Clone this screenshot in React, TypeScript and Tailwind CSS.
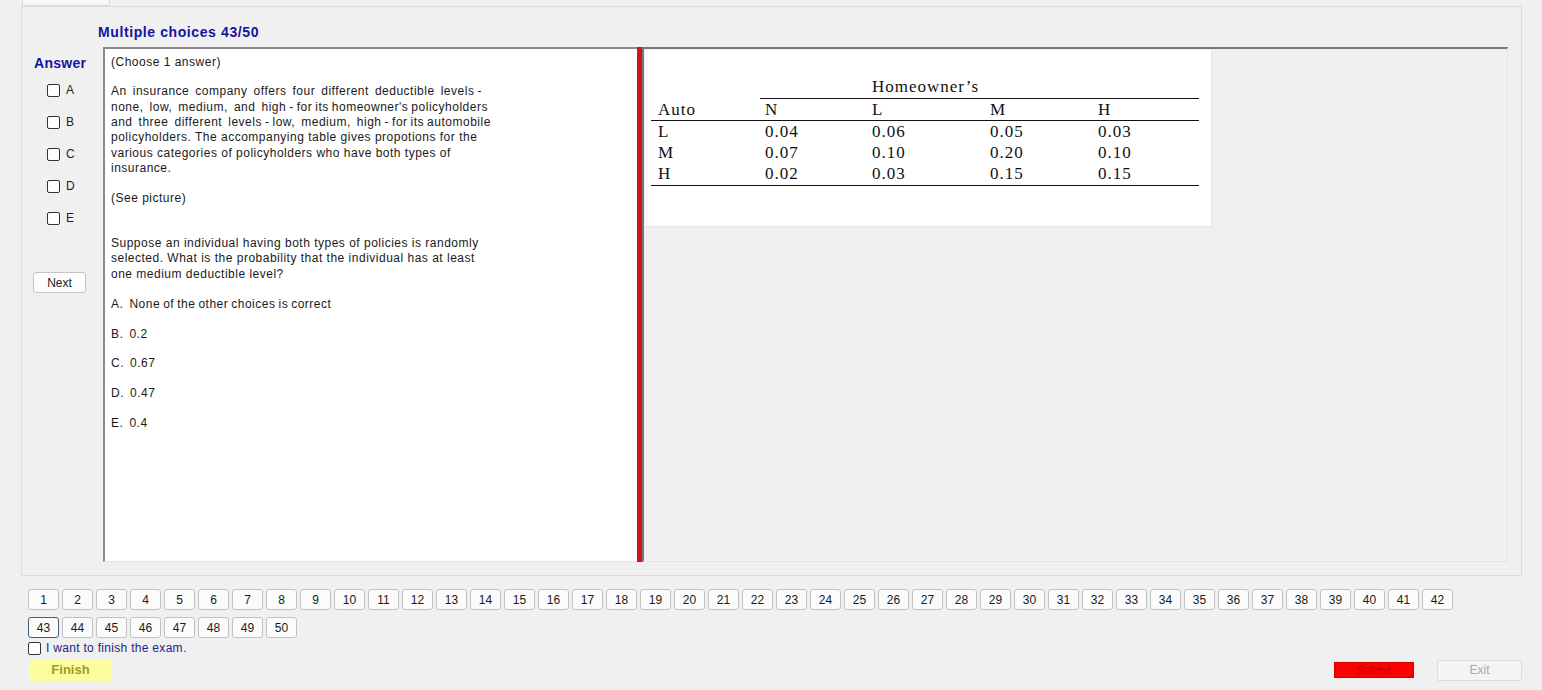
import React from "react";

const para1a = [
  "An  insurance  company  offers  four  different  deductible  levels -",
  "none,  low,  medium,  and  high - for its homeowner's policyholders",
  "and  three  different  levels - low,  medium,  high - for its automobile",
];
const para1b = [
  "policyholders. The accompanying table gives propotions for the",
  "various categories of policyholders who have both types of",
  "insurance.",
];

const para2 = [
  "Suppose an individual having both types of policies is randomly",
  "selected. What is the probability that the individual has at least",
  "one medium deductible level?",
];

const choices = [
  "A.  None of the other choices is correct",
  "B.  0.2",
  "C.  0.67",
  "D.  0.47",
  "E.  0.4",
];

const rows = [
  ["L", "0.04", "0.06", "0.05", "0.03"],
  ["M", "0.07", "0.10", "0.20", "0.10"],
  ["H", "0.02", "0.03", "0.15", "0.15"],
];

function Cols({ cells }: { cells: string[] }) {
  return (
    <div className="flex h-[21px] items-center pl-[13px]">
      <div className="w-[107px]">{cells[0]}</div>
      <div className="w-[107px]">{cells[1]}</div>
      <div className="w-[118px]">{cells[2]}</div>
      <div className="w-[108px]">{cells[3]}</div>
      <div>{cells[4]}</div>
    </div>
  );
}

const btn =
  "w-[31px] h-[21px] border border-[#c2c2c2] rounded-[3px] bg-[#fbfbfb] flex items-center justify-center text-[12px] text-[#1a1a1a]";
const btnActive =
  "w-[31px] h-[21px] border border-[#3d5f80] rounded-[3px] bg-[#fbfbfb] flex items-center justify-center text-[12px] text-[#1a1a1a]";

export default function App() {
  const row1 = Array.from({ length: 42 }, (_, i) => i + 1);
  const row2 = Array.from({ length: 8 }, (_, i) => i + 43);
  return (
    <div
      className="w-[1542px] h-[690px] bg-[#f0f0f0] overflow-hidden text-[12px] text-[#1a1a1a]"
      style={{ fontFamily: '"Liberation Sans", Arial, sans-serif' }}
    >
      {/* tab strip */}
      <div className="h-[6px] flex">
        <div className="ml-[22px] w-[88px] h-[6px] bg-[#f7f7f7] border-x border-b border-[#d9d9d9]" />
      </div>
      {/* tab panel */}
      <div className="ml-[21px] w-[1501px] h-[570px] border border-[#dcdcdc] bg-[#f0f0f0]">
        <div className="h-[40px] pl-[76px] pt-[17px]">
          <div className="text-[14px] leading-[16px] font-bold tracking-[0.6px] text-[#1414a0]">Multiple choices 43/50</div>
        </div>
        <div className="flex h-[515px]">
          {/* left column */}
          <div className="w-[81px] flex flex-col">
            <div className="pl-[12px] pt-[8px] text-[14px] leading-[16px] font-bold tracking-[0.3px] text-[#1414a0]">Answer</div>
            <div className="mt-[3px] flex flex-col">
              {["A", "B", "C", "D", "E"].map((l) => (
                <div key={l} className="h-[32px] flex items-center pl-[25px]">
                  <div className="w-[13px] h-[13px] border border-[#333333] rounded-[2px] bg-white" />
                  <span className="ml-[6px] leading-[14px] text-[#222]">{l}</span>
                </div>
              ))}
            </div>
            <div className="mt-[38px] ml-[11px] w-[53px] h-[21px] border border-[#c4c4c4] rounded-[3px] bg-[#fdfdfd] flex items-center justify-center text-[12px] text-[#222]">
              Next
            </div>
          </div>
          {/* text box */}
          <div className="w-[534px] h-full bg-white border-t-2 border-l-2 border-[#8a8a8a] border-b border-b-[#e3e3e3] pl-[6px] pt-[5.5px] leading-[15.3px] text-[12px] tracking-[0.5px] text-[#1a1a1a]">
            <div>(Choose 1 answer)</div>
            <div className="mt-[14.7px]">
              {para1a.map((l, i) => (
                <div key={i} className="whitespace-pre [word-spacing:-0.8px]">{l}</div>
              ))}
              {para1b.map((l, i) => (
                <div key={i} className="whitespace-pre">{l}</div>
              ))}
            </div>
            <div className="mt-[14.7px]">(See picture)</div>
            <div className="mt-[29.7px]">
              {para2.map((l, i) => (
                <div key={i} className="whitespace-pre">{l}</div>
              ))}
            </div>
            {choices.map((c, i) => (
              <div key={i} className="mt-[14.7px] whitespace-pre [word-spacing:-0.8px]">{c}</div>
            ))}
          </div>
          {/* red splitter */}
          <div className="w-[5px] h-full bg-[#d0141a]" />
          {/* right panel */}
          <div className="w-[866px] h-full border-t-2 border-l-2 border-[#777777] border-b border-b-[#e3e3e3] border-r border-r-[#e3e3e3] bg-[#f0f0f0]">
            <div
              className="ml-[1px] mt-[1px] w-[567px] h-[177px] bg-white border-r border-b border-[#e6e6e6] pt-[26px] text-[17px] tracking-[1px] text-[#111]"
              style={{ fontFamily: '"Liberation Serif", "Times New Roman", serif' }}
            >
              <div className="h-[22px] flex items-center pl-[227px]">Homeowner’s</div>
              <div className="ml-[115px] w-[439px] h-[1px] bg-[#111]" />
              <Cols cells={["Auto", "N", "L", "M", "H"]} />
              <div className="ml-[6px] w-[548px] h-[1px] bg-[#111]" />
              {rows.map((r, i) => (
                <Cols key={i} cells={r} />
              ))}
              <div className="mt-[1px] ml-[6px] w-[548px] h-[1px] bg-[#111]" />
            </div>
          </div>
        </div>
      </div>
      {/* navigation buttons */}
      <div className="mt-[13px] pl-[28px]">
        <div className="flex gap-x-[3px]">
          {row1.map((n) => (
            <div key={n} className={btn}>
              {n}
            </div>
          ))}
        </div>
        <div className="mt-[7px] flex gap-x-[3px]">
          {row2.map((n) => (
            <div key={n} className={n === 43 ? btnActive : btn}>
              {n}
            </div>
          ))}
        </div>
        <div className="mt-[3px] h-[14px] flex items-center">
          <div className="w-[13px] h-[13px] border border-[#333333] rounded-[2px] bg-white" />
          <span className="ml-[5px] leading-[14px] text-[12px] tracking-[0.3px] text-[#22228c]">I want to finish the exam.</span>
        </div>
      </div>
      <div className="mt-[4px] h-[22px] flex items-center pl-[29px] pr-[20px]">
        <div className="w-[83px] h-[21px] bg-[#fdfda0] flex items-center justify-center text-[13px] font-bold text-[#9c9c1c]">
          Finish
        </div>
        <div className="ml-auto w-[80px] h-[16px] bg-[#ff0000] border border-[#d00000] flex items-center justify-center text-[11px] text-[#c00000]">
          Submit
        </div>
        <div className="ml-[23px] w-[85px] h-[21px] border border-[#dcdcdc] rounded-[2px] bg-[#f4f4f4] flex items-center justify-center text-[12px] text-[#a8a8a8]">
          Exit
        </div>
      </div>
    </div>
  );
}
